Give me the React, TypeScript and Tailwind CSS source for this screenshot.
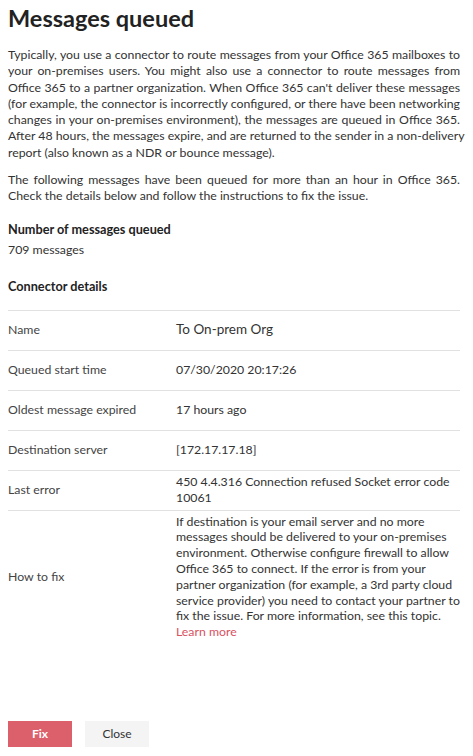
const rows: { label: string; value: string[]; big?: boolean; link?: boolean }[] = [
  { label: 'Name', value: ['To On-prem Org'], big: true },
  { label: 'Queued start time', value: ['07/30/2020 20:17:26'] },
  { label: 'Oldest message expired', value: ['17 hours ago'] },
  { label: 'Destination server', value: ['[172.17.17.18]'] },
  { label: 'Last error', value: ['450 4.4.316 Connection refused Socket error code', '10061'] },
  {
    label: 'How to fix',
    value: [
      'If destination is your email server and no more',
      'messages should be delivered to your on-premises',
      'environment. Otherwise configure firewall to allow',
      'Office 365 to connect. If the error is from your',
      'partner organization (for example, a 3rd party cloud',
      'service provider) you need to contact your partner to',
      'fix the issue. For more information, see this topic.',
    ],
    link: true,
  },
];

const intro = [
  'Typically, you use a connector to route messages from your Office 365 mailboxes to',
  'your on-premises users. You might also use a connector to route messages from',
  "Office 365 to a partner organization. When Office 365 can't deliver these messages",
  '(for example, the connector is incorrectly configured, or there have been networking',
  'changes in your on-premises environment), the messages are queued in Office 365.',
  'After 48 hours, the messages expire, and are returned to the sender in a non-delivery',
];

function Justified({ lines, last }: { lines: string[]; last: string }) {
  return (
    <p className="text-[12.3px] leading-[16.3px] text-[#333]">
      {lines.map((l) => (
        <span key={l} className="block whitespace-nowrap text-justify [text-align-last:justify]">
          {l}
        </span>
      ))}
      <span className="block whitespace-nowrap">{last}</span>
    </p>
  );
}

export default function App() {
  return (
    <div className="flex h-[756px] flex-col bg-white pl-2 pr-[13px] font-['Lato',sans-serif]">
      <h1 className="pt-1 text-[23.5px] font-bold leading-[28px] text-[#222]">Messages queued</h1>

      <div className="mt-[15px]">
        <Justified lines={intro} last="report (also known as a NDR or bounce message)." />
      </div>

      <div className="mt-[11px]">
        <Justified
          lines={['The following messages have been queued for more than an hour in Office 365.']}
          last="Check the details below and follow the instructions to fix the issue."
        />
      </div>

      <div className="mt-[16px] text-[12.7px] font-bold leading-[16px] text-[#222]">Number of messages queued</div>
      <div className="mt-[5px] text-[12.3px] leading-[16px] text-[#333]">709 messages</div>

      <div className="mt-[20px] text-[12.7px] font-bold leading-[16px] text-[#222]">Connector details</div>

      <div className="mt-[16px] border-t border-[#e1e1e1]">
        {rows.map((r, i) => (
          <div
            key={r.label}
            className={`flex min-h-[40px] items-center py-[3px] text-[12.3px] ${
              i < rows.length - 1 ? 'border-b border-[#e1e1e1]' : ''
            }`}
          >
            <div className="w-[168px] shrink-0 text-[#444]">{r.label}</div>
            <div className={`text-[#333] ${r.big ? 'text-[13.5px]' : ''} leading-[15.8px]`}>
              {r.value.map((v) => (
                <span key={v} className="block whitespace-nowrap">
                  {v}
                </span>
              ))}
              {r.link && <a className="block text-[#d9525f]">Learn more</a>}
            </div>
          </div>
        ))}
      </div>

      <div className="mt-auto mb-[9px] flex gap-[13px]">
        <button className="h-[26px] w-[64px] bg-[#dc5f6c] text-[12px] font-bold text-white">Fix</button>
        <button className="h-[26px] w-[64px] bg-[#f4f4f4] text-[12px] text-[#333]">Close</button>
      </div>
    </div>
  );
}
